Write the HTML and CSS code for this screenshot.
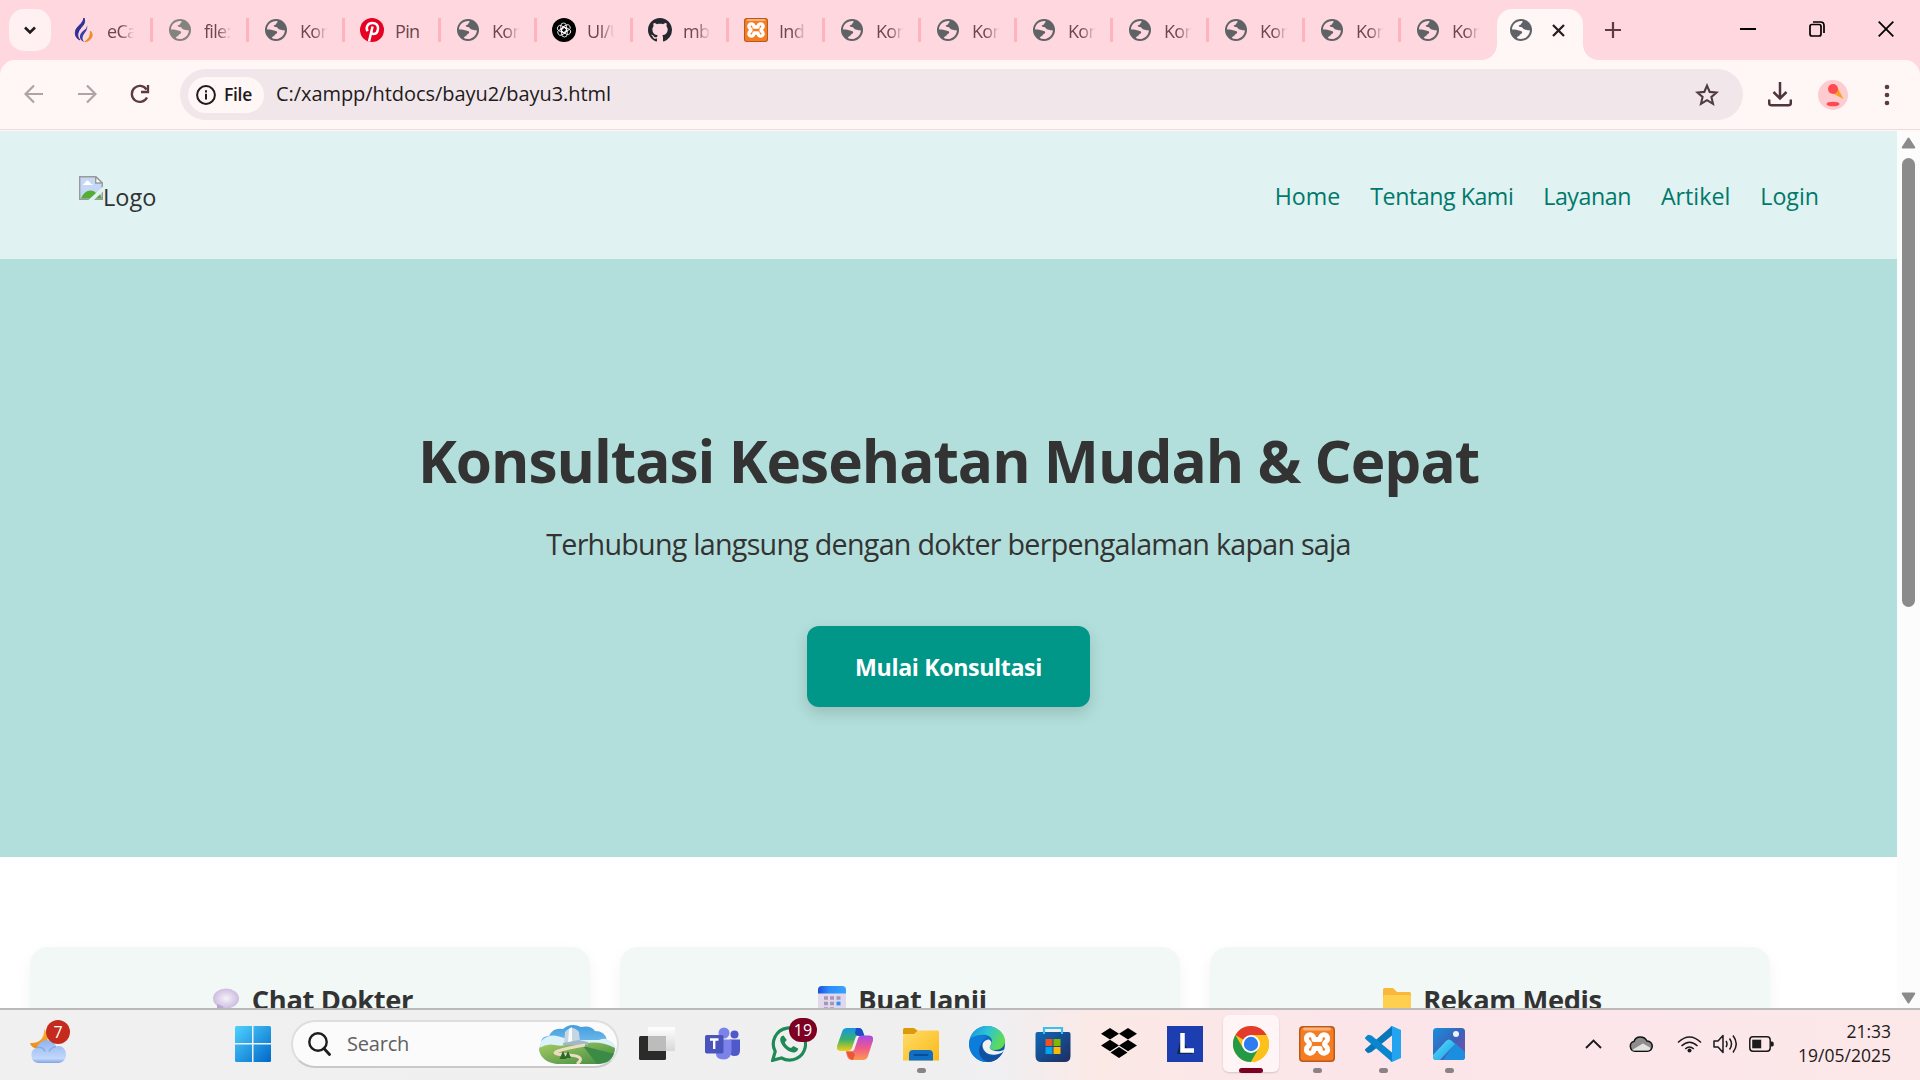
FILE: index.html
```html
<!DOCTYPE html>
<html lang="id">
<head>
<meta charset="utf-8">
<title>Konsultasi Kesehatan</title>
<link rel="stylesheet" href="styles.css">
</head>
<body>
<svg class="defs" aria-hidden="true">
  <defs>
    <symbol id="globe" viewBox="0 0 24 24">
      <circle cx="12" cy="12" r="12" fill="currentColor"/>
      <path class="cut" d="M2.200 11.500C2.300 6.300 6.500 2.200 12.600 2.300c1.700 0 1.400 1.300.3 2-1 .6-.7 1.500-1.500 2.100-.9.600-2 .4-1.900 1.300.1 1 1.700.9 2.800 1.100 1.500.3 1.800 1.900 3 2.500 1.200.6 2 .3 3 .7 1 .5 1.900.5 3.400.2-.3 5.400-4.500 9.600-9.900 9.600-1.700 0-3.200-.4-4.300-1 .2-1.300 1-1.500 2-2.200 1-.6.9-1.600 1.900-2.100 1-.5 1.900-.8 1.900-1.800s-1-1.900-2.400-2c-1.700-.1-2.500-.5-4.200-.9-1.900-.4-2.700-.3-4.500-.3z"/>
    </symbol>
    <symbol id="xampp" viewBox="0 0 36 36">
      <rect width="36" height="36" rx="4" fill="#b85a1c"/>
      <rect x="1.500" y="1.500" width="33" height="33" rx="3" fill="#f57c22"/>
      <rect x="4" y="1.500" width="28" height="3" rx="1.500" fill="#f9b27c"/>
      <path d="M18 13.500h-3C15 6.500 6 8 7.500 13.500c.6 2.500 3 2.500 3 4.500s-2.400 2-3 4.500C6 28 15 29.500 15 22.500h6c0 7 9 5.500 7.500 0-.6-2.500-3-2.500-3-4.500s2.400-2 3-4.500C30 8 21 6.500 21 13.500z" fill="none" stroke="#fff" stroke-width="5" stroke-linejoin="round"/>
    </symbol>
    <linearGradient id="win" x2="1" y2="1"><stop stop-color="#4fd2ff"/><stop offset="1" stop-color="#0067c8"/></linearGradient>
    <linearGradient id="cloud" x2="0" y2="1"><stop stop-color="#8fb4ee"/><stop offset=".8" stop-color="#c3d8fa"/><stop offset="1" stop-color="#7fa2e6"/></linearGradient>
    <linearGradient id="moon" x2="0" y2="1"><stop stop-color="#f7b83a"/><stop offset="1" stop-color="#ee8a15"/></linearGradient>
    <linearGradient id="sky" x2="0" y2="1"><stop stop-color="#3f9be0"/><stop offset="1" stop-color="#a8dcf4"/></linearGradient>
    <linearGradient id="hill" x2="1" y2="1"><stop stop-color="#a9cc62"/><stop offset="1" stop-color="#3d8a42"/></linearGradient>
    <linearGradient id="copA" x2="0" y2="1"><stop stop-color="#1596e8"/><stop offset=".5" stop-color="#3bb06a"/><stop offset="1" stop-color="#f2cf14"/></linearGradient>
    <linearGradient id="copB" x2="0" y2="1"><stop stop-color="#a64be8"/><stop offset=".5" stop-color="#f0588a"/><stop offset="1" stop-color="#fb9a4e"/></linearGradient>
    <linearGradient id="edgeA" x2="1" y2=".4"><stop stop-color="#1590dc"/><stop offset=".5" stop-color="#2cc3d8"/><stop offset="1" stop-color="#5fdc54"/></linearGradient>
    <linearGradient id="edgeB" x2="1" y2="1"><stop stop-color="#0c7fdc"/><stop offset="1" stop-color="#0f4f9e"/></linearGradient>
    <linearGradient id="fold" x2="1" y2="1"><stop stop-color="#ffdc6b"/><stop offset="1" stop-color="#fbb915"/></linearGradient>
    <linearGradient id="store" x2="1" y2="1"><stop stop-color="#0e69b8"/><stop offset="1" stop-color="#1f2c60"/></linearGradient>
    <linearGradient id="photo" x2="1" y2="1"><stop stop-color="#1690e0"/><stop offset=".5" stop-color="#3b62b8"/><stop offset="1" stop-color="#8a45a8"/></linearGradient>
    <linearGradient id="peak" x2="1" y2="1"><stop stop-color="#5fe4fc"/><stop offset="1" stop-color="#149ae4"/></linearGradient>
    <linearGradient id="glass" x2="0" y2="1"><stop stop-color="#fff"/><stop offset="1" stop-color="#d8d8d8"/></linearGradient>
    <radialGradient id="balloon"><stop stop-color="#f6f1fa"/><stop offset="1" stop-color="#cdbde0"/></radialGradient>
    <linearGradient id="calTop" x2="1"><stop stop-color="#1a4fd8"/><stop offset=".4" stop-color="#2d8cff"/><stop offset="1" stop-color="#36a4ff"/></linearGradient>
  </defs>
</svg>

<div class="screen">
  <div class="tabstrip">
    <button class="tab-search"><svg viewBox="0 0 16 16" width="16" height="16"><path d="M3 5.500l5 5 5-5" fill="none" stroke="#1f1a1c" stroke-width="2.600"/></svg></button>
    <div class="tabs">
      <div class="tab"><svg class="fav" viewBox="0 0 24 24"><path d="M12 0c2 5-1 7-4 11s-3 8 0 11C3 20 2 14 5 10s6-5 7-10z" fill="#2b2f96" stroke="#2b2f96"/><path d="M15 7c1 4-1 6-3 9s-2 5 0 8c-5-2-5-7-2-10s5-3 5-7z" fill="#3a3fa8"/><path d="M18.500 13c4 5 0 10-6 11 4-3 6-5 6-11z" fill="#f08a24" stroke="#f08a24"/></svg><span>eCa</span></div>
      <div class="tab"><svg class="fav globe pale"><use href="#globe"/></svg><span>file:</span></div>
      <div class="tab"><svg class="fav globe"><use href="#globe"/></svg><span>Kon</span></div>
      <div class="tab"><svg class="fav" viewBox="0 0 24 24"><circle cx="12" cy="12" r="12" fill="#e60023"/><path d="M7.500 13.300C5.300 9 8 5 12.300 5c4 0 6 2.700 5.700 5.600-.3 3.300-2.200 5.400-4.500 5.300-1.200 0-1.800-.7-2-1.200M12.600 8.500L9 23.500" fill="none" stroke="#fff" stroke-width="2.500"/></svg><span class="short">Pin</span></div>
      <div class="tab"><svg class="fav globe"><use href="#globe"/></svg><span>Kon</span></div>
      <div class="tab"><svg class="fav" viewBox="0 0 24 24"><circle cx="12" cy="12" r="12" fill="#000"/><g fill="none" stroke="#fff" stroke-width=".85"><rect id="petal" x="8.800" y="5" width="5.600" height="9.500" rx="2.800"/><use href="#petal" transform="rotate(60 12 12)"/><use href="#petal" transform="rotate(120 12 12)"/><use href="#petal" transform="rotate(180 12 12)"/><use href="#petal" transform="rotate(240 12 12)"/><use href="#petal" transform="rotate(300 12 12)"/></g></svg><span>UI/U</span></div>
      <div class="tab"><svg class="fav" viewBox="0 0 16 16"><path fill="#24292f" d="M8 0C3.580 0 0 3.580 0 8c0 3.540 2.290 6.530 5.470 7.590.4.070.55-.17.55-.38 0-.19-.01-.82-.01-1.490-2.010.37-2.530-.49-2.690-.94-.09-.23-.48-.94-.82-1.130-.28-.15-.68-.52-.01-.53.63-.01 1.080.58 1.230.82.72 1.210 1.870.87 2.330.66.070-.52.28-.87.51-1.070-1.780-.2-3.640-.89-3.640-3.950 0-.87.31-1.590.82-2.150-.08-.2-.36-1.020.08-2.120 0 0 .67-.21 2.200.82.64-.18 1.320-.27 2-.27s1.360.09 2 .27c1.530-1.040 2.200-.82 2.200-.82.44 1.100.16 1.920.08 2.120.51.56.82 1.270.82 2.150 0 3.070-1.870 3.750-3.650 3.950.29.25.54.73.54 1.480 0 1.070-.01 1.930-.01 2.200 0 .21.15.46.55.38A8.010 8.010 0 0 0 16 8c0-4.420-3.580-8-8-8z"/></svg><span>mb</span></div>
      <div class="tab"><svg class="fav"><use href="#xampp"/></svg><span>Ind</span></div>
      <div class="tab"><svg class="fav globe"><use href="#globe"/></svg><span>Kon</span></div>
      <div class="tab"><svg class="fav globe"><use href="#globe"/></svg><span>Kon</span></div>
      <div class="tab"><svg class="fav globe"><use href="#globe"/></svg><span>Kon</span></div>
      <div class="tab"><svg class="fav globe"><use href="#globe"/></svg><span>Kon</span></div>
      <div class="tab"><svg class="fav globe"><use href="#globe"/></svg><span>Kon</span></div>
      <div class="tab"><svg class="fav globe"><use href="#globe"/></svg><span>Kon</span></div>
      <div class="tab last"><svg class="fav globe"><use href="#globe"/></svg><span>Kon</span></div>
      <div class="tab active"><svg class="fav globe"><use href="#globe"/></svg><svg width="13" height="13" viewBox="0 0 13 13"><path d="M1 1l11 11M12 1L1 12" stroke="#2a1d20" stroke-width="2.300"/></svg></div>
    </div>
    <svg class="new-tab" width="16" height="16" viewBox="0 0 16 16"><path d="M8 0v16M0 8h16" stroke="#5b3a40" stroke-width="2.200"/></svg>
    <div class="window-buttons">
      <svg width="16" height="16" viewBox="0 0 16 16"><path d="M0 8h16" stroke="#000" stroke-width="2"/></svg>
      <svg width="16" height="16" viewBox="0 0 16 16" fill="none" stroke="#000" stroke-width="1.700"><rect x="1" y="3.500" width="11" height="11.500" rx="2"/><path d="M4 1h7.500Q15 1 15 4.500V12"/></svg>
      <svg width="16" height="16" viewBox="0 0 16 16"><path d="M.7 .7l14.600 14.600M15.300 .7L.7 15.300" stroke="#000" stroke-width="1.800"/></svg>
    </div>
  </div>

  <div class="toolbar">
    <svg class="nav-icon" width="20" height="20" viewBox="0 0 20 20"><path d="M19 10H2M10 1.500L1.500 10l8.500 8.500" fill="none" stroke="#b0a3a5" stroke-width="2.200"/></svg>
    <svg class="nav-icon" width="20" height="20" viewBox="0 0 20 20"><path d="M1 10h17M10 1.500l8.500 8.500-8.500 8.500" fill="none" stroke="#b0a3a5" stroke-width="2.200"/></svg>
    <svg class="nav-icon" width="20" height="20" viewBox="0 0 20 20"><path d="M17 13.500A8 8 0 1 1 16.500 5.500M18 1v7h-7" fill="none" stroke="#5b3a40" stroke-width="2.300"/></svg>
    <div class="omnibox">
      <div class="chip"><svg width="20" height="20" viewBox="0 0 20 20"><circle cx="10" cy="10" r="8.900" fill="none" stroke="#221a1c" stroke-width="2"/><path d="M10 8.800v5.700M10 5.300v2.100" stroke="#221a1c" stroke-width="2"/></svg><span>File</span></div>
      <span class="url">C:/xampp/htdocs/bayu2/bayu3.html</span>
      <svg class="star" width="24" height="23" viewBox="0 0 24 23"><path d="M12 2.600l2.700 6.300 6.900.6-5.200 4.500 1.600 6.800-6-3.600-6 3.600L7.600 14 2.400 9.500l6.900-.6z" fill="none" stroke="#4f3b42" stroke-width="2.100"/></svg>
    </div>
    <svg class="download" width="24" height="25" viewBox="0 0 24 25"><path d="M12 0v16M5.500 10l6.500 6.500 6.500-6.500M1.200 17.500V21q0 2.300 2.300 2.300h17q2.300 0 2.300-2.300v-3.500" fill="none" stroke="#4f353c" stroke-width="2.500"/></svg>
    <svg class="avatar" width="30" height="30" viewBox="0 0 30 30"><circle cx="15" cy="15" r="15" fill="#fecbd0"/><path d="M15 13.500l5-5L25.500 19z" fill="#fba024"/><circle cx="15" cy="9" r="5" fill="#ff4a50"/><ellipse cx="15" cy="24" rx="6.500" ry="2.300" fill="#ff4a50"/></svg>
    <svg class="menu" width="6" height="22" viewBox="0 0 6 22" fill="#5b3a40"><circle cx="3" cy="3" r="2.300"/><circle cx="3" cy="11" r="2.300"/><circle cx="3" cy="19" r="2.300"/></svg>
  </div>

  <div class="viewport">
    <div class="page">
      <header class="site-header">
        <div class="logo"><svg width="24" height="24" viewBox="0 0 24 24"><path d="M.7.700h16L23.300 7v16.300H.7z" fill="#c5d9f7" stroke="#9a9a9a" stroke-width="1.400"/><path d="M16.700.700V7h6.600z" fill="#fff" stroke="#9a9a9a" stroke-width="1.400"/><path d="M3.500 9q2-1 3-3 2-3 4 0 1 2 4 3z" fill="#fff"/><path d="M2 22.500C5 15 12 12 17 17l4 1 2 4.500z" fill="#55ad35"/><path d="M24 10.500L9.500 24H15l9-8.500z" fill="#e0f2f1"/></svg><span>Logo</span></div>
        <nav class="site-nav"><a>Home</a><a class="tight">Tentang Kami</a><a class="tight">Layanan</a><a>Artikel</a><a>Login</a></nav>
      </header>
      <section class="hero">
        <h1>Konsultasi Kesehatan Mudah &amp; Cepat</h1>
        <p>Terhubung langsung dengan dokter berpengalaman kapan saja</p>
        <a class="cta">Mulai Konsultasi</a>
      </section>
      <section class="services">
        <article class="card"><h3><svg width="28" height="28" viewBox="0 0 28 28"><ellipse cx="14" cy="12.500" rx="13" ry="10" fill="url(#balloon)"/><path d="M5 18l0 7 7-4z" fill="#b9a6d4"/></svg><span>Chat Dokter</span></h3></article>
        <article class="card"><h3><svg width="28" height="28" viewBox="0 0 28 28"><rect width="28" height="28" rx="4" fill="#e2d8ee"/><path d="M0 7.500V4q0-4 4-4h20q4 0 4 4v3.500z" fill="url(#calTop)"/><path d="M6 12h4M12 12h4M18.500 12h4M6 17.500h4M12 17.500h4M6 23h4M12 23h4" stroke="#a598b4" stroke-width="3.600"/><path d="M18.500 17.500h4" stroke="#2d96f5" stroke-width="3.800"/></svg><span>Buat Janji</span></h3></article>
        <article class="card"><h3><svg width="28" height="28" viewBox="0 0 28 28"><path d="M0 3.500Q0 2 1.500 2H10l4 4h12.500Q28 6 28 7.500V16H0z" fill="#f9b83c"/><path d="M0 11q0-2 2-2h24q2 0 2 2v15H0z" fill="#ffcf50"/></svg><span>Rekam Medis</span></h3></article>
      </section>
    </div>
    <div class="scrollbar">
      <svg width="15" height="12" viewBox="0 0 15 12"><path d="M7.500 1.500l5.800 9H1.700z" fill="#8b8b8b" stroke="#8b8b8b" stroke-width="2" stroke-linejoin="round"/></svg>
      <div class="thumb"></div>
      <svg class="down" width="15" height="12" viewBox="0 0 15 12"><path d="M7.500 10.500l5.800-9H1.700z" fill="#8b8b8b" stroke="#8b8b8b" stroke-width="2" stroke-linejoin="round"/></svg>
    </div>
  </div>

  <div class="taskbar">
    <div class="weather"><svg width="36" height="43" viewBox="0 0 36 43"><path d="M14 8c1 9-5 15-14 14 1 4 6 7 12 5s8-12 2-19z" fill="url(#moon)"/><path d="M8 42a8 8 0 0 1-1-15.500C9 18 23 16 26 25.500c6-2 10 3 10 8 0 6-4 8.500-9 8.500z" fill="url(#cloud)"/><path d="M7 26.500c4-1 7 1 8 4M26 25.500q-5 1-7 5" fill="none" stroke="#86a9e8" stroke-width="1.500"/></svg><b>7</b></div>
    <svg class="start" width="36" height="36" viewBox="0 0 36 36" fill="url(#win)"><path d="M1.500 0H17v17H0V1.500Q0 0 1.500 0zM18.500 0h16Q36 0 36 1.500V17H18.500zM0 18.500h17V36H1.500Q0 36 0 34.500zM18.500 18.500H36v16q0 1.500-1.500 1.500h-16z"/></svg>
    <div class="search">
      <svg width="23" height="24" viewBox="0 0 23 24"><circle cx="10" cy="10" r="8.700" fill="none" stroke="#1d1d1d" stroke-width="2.400"/><path d="M16 16.500l5.500 6" stroke="#1d1d1d" stroke-width="2.800" stroke-linecap="round"/></svg>
      <span>Search</span>
      <svg class="scene" width="76" height="40" viewBox="0 0 76 40"><clipPath id="sc"><path d="M2 19Q2 12 10 12 14 3 24 5 32-2 42 3q10-2 14 4 10 0 12 9 8 3 8 9-2 14-16 15H18Q2 38 0 25z"/></clipPath><g clip-path="url(#sc)"><rect width="76" height="40" fill="url(#sky)"/><path d="M2 17q8-7 16-5t14 4h28q8-4 16 4v6H0z" fill="#dcf1f8"/><path d="M0 24q8-5 16-3t12-1 20-1q14-2 28 5v16H0z" fill="url(#hill)"/><path d="M44 22l32 8v6L58 40z" fill="#3b8a46"/><path d="M26 8q7-8 14 0l1 11H25z" fill="#c5d6e2"/><path d="M30 5l3-2v16h-4z" fill="#f8fbfd"/><path d="M40 16l9 2v3H24v-2z" fill="#9fb8ca"/><path d="M46 21q-18 3-27 6t10 4 9 9" fill="none" stroke="#ecdcc2" stroke-width="3"/><path d="M24 27l3.500 8h-7zM29 27l3 7h-6z" fill="#2c6b2a"/></g></svg>
    </div>
    <div class="apps">
      <div class="app"><svg viewBox="0 0 36 36"><rect x="0" y="10" width="27" height="24" rx="1.500" fill="#2b2b2a"/><rect x="9" y="1" width="27" height="24" rx="1" fill="url(#glass)"/><rect x="9" y="10" width="18" height="15" fill="#bcbcbc"/></svg></div>
      <div class="app"><svg viewBox="0 0 36 36"><circle cx="19" cy="7" r="5.500" fill="#7b83eb"/><circle cx="29.500" cy="8.500" r="4" fill="#5059c9"/><path d="M25 13.500h10v11q0 5.500-5.500 5.500T25 25z" fill="#5059c9"/><path d="M11 13.500h15.500v11q0 9-8 9t-7.500-7z" fill="#7b83eb"/><rect y="9" width="18.500" height="18.500" rx="1.800" fill="#4b53bc"/><path d="M5 13.500h8.500M9.200 13.500v9.500" stroke="#fff" stroke-width="2.400"/></svg></div>
      <div class="app"><svg viewBox="0 0 36 36"><path d="M1.700 34.300l2.500-8.800A16.100 16.100 0 1 1 10.500 32z" fill="none" stroke="#1f8a55" stroke-width="3.200"/><path d="M12.500 9.500c-2.200 0-3.300 2.200-3.300 4.300 0 5 7.500 12.700 13.200 12.700 2.600 0 4.800-1.700 4.700-4l-4.700-2.600-2.400 2.200c-3-.9-5.200-3.200-6.200-5.900l2-2.200z" fill="#1f8a55"/></svg><b class="count">19</b></div>
      <div class="app"><svg viewBox="0 0 36 36"><path d="M10 2h11q4 0 5 4l1 3h-5q-3 0-4 4l-3 9q-1 3-4 3H4q-5 0-4-5L5 6q1-4 5-4z" fill="url(#copA)"/><path d="M19 2h3q3 0 4 4l1.500 4H22q-3 0-4-3z" fill="#1d4cc4"/><path d="M26 34H15q-4 0-5-4l-1-4.500h5q3 0 4-4l3-9q1-3 4-3h7q5 0 4 5l-5 15.500q-1 4-5 4z" fill="url(#copB)"/><path d="M9 25.500h5q2.500 0 4 3l-2 5.500q-4-.5-5-4z" fill="#ee5535"/></svg></div>
      <div class="app"><svg viewBox="0 0 36 36"><path d="M0 3.500Q0 2 1.500 2H11l4 3-4 4H0z" fill="#dc9a0a"/><path d="M0 8h11l4-3.500h19.500Q36 4.500 36 6v28.500H0z" fill="url(#fold)"/><path d="M6 34.500V28q0-4 4-4h16q4 0 4 4v6.500z" fill="#0f6fc4"/><path d="M11.500 29h13" stroke="#0a4d92" stroke-width="2" stroke-linecap="round"/></svg><i></i></div>
      <div class="app"><svg viewBox="0 0 36 36"><circle cx="18" cy="18" r="18" fill="url(#edgeB)"/><path d="M1 13C3 5 10 0 18 0c10 0 18 7 18 15 0 6-5 9-10 9-4 0-6-2-5-4 1-1 2-2 2-5 0-4-5-7-11-6-5 .5-9 2-11 4z" fill="url(#edgeA)"/><path d="M0 16c3-6 12-8 18-5-6 2-7 9-4 14 4 6 12 7 17 4-3 5-8 7-13 7C8 36 0 28 0 16z" fill="#0d7ddb"/><path d="M15 15c-4 5-1 13 7 14.500 5 1 9-1 11-3-2 5-7 9.500-14 9.500-10-3-12-15-4-21z" fill="#11519f"/><path d="M20 13.500c-5 .5-7.500 4-6 8.500 1.500 5 7 7.500 13 6.500 5-.7 7.500-2.500 8.500-5-3 2-8 2.500-12 .8-3-1.300-3.500-3-2-5 1.500-2 1.500-4-1.500-5.800z" fill="#f1f1f2"/></svg></div>
      <div class="app"><svg viewBox="0 0 36 36"><path d="M9 8V2h18v6" fill="none" stroke="#35c1f1" stroke-width="2.200"/><path d="M.5 8q0-2 2-2h31q2 0 2 2v22q0 6-6 6h-23q-6 0-6-6z" fill="url(#store)"/><path d="M9 8V2.500M27 8V2.500" stroke="#35c1f1" stroke-width="2"/><path d="M10.500 13h7v7h-7z" fill="#f25022"/><path d="M18.500 13h7v7h-7z" fill="#7fba00"/><path d="M10.500 21h7v7h-7z" fill="#00a4ef"/><path d="M18.500 21h7v7h-7z" fill="#ffb900"/></svg></div>
      <div class="app"><svg viewBox="0 0 36 36"><path d="M9 2l9 5.800-9 5.700-9-5.700zM27 2l9 5.800-9 5.700-9-5.700zM9 13.700l9 5.700-9 5.800-9-5.800zM27 13.700l9 5.700-9 5.800-9-5.800zM18 21l8.500 5.500L18 32l-8.500-5.500z"/></svg></div>
      <div class="app"><svg viewBox="0 0 36 36"><path d="M0 0h36v36H0z" fill="#1d3eb0"/><path d="M14 12L10 28h16l-4-3z" fill="#0b2a4a"/><path d="M15.500 7v17.500H27" fill="none" stroke="#fff" stroke-width="4.500"/></svg></div>
      <div class="app current"><svg viewBox="0 0 36 36"><circle cx="18" cy="18" r="18" fill="#fcc21b"/><path d="M18 18L2.400 9A18 18 0 0 1 33.600 9z" fill="#e33b2e"/><path d="M18 9h15.600L18 12z" fill="#e33b2e"/><path d="M2.400 9A18 18 0 0 0 18 36l7.800-13.500L18 27 10.200 22.500z" fill="#259a46"/><path d="M25.800 22.500L18 36A18 18 0 0 0 33.600 9H18z" fill="#fcc21b"/><circle cx="18" cy="18" r="9" fill="#fff"/><circle cx="18" cy="18" r="7.200" fill="#2f7cf0"/></svg><i></i></div>
      <div class="app"><svg><use href="#xampp"/></svg><i></i></div>
      <div class="app"><svg viewBox="0 0 36 36"><path d="M27 0v9.500L6.500 26 3 27.200.4 24.800q-.8-.9 0-1.800z" fill="#0877b9"/><path d="M27 36v-9.500L6.500 9.500 3 8.700.4 11.200q-.8.900 0 1.800z" fill="#0a86cf"/><path d="M27 0l9 4v28l-9 4q-1.500 0-2-1 2 1 2-1V2q0-2-2-1 .5-1 2-1z" fill="#24a3f0"/></svg><i></i></div>
      <div class="app"><svg viewBox="0 0 36 36"><rect x="2" y="2" width="32" height="32" rx="3.500" fill="url(#photo)"/><circle cx="25" cy="8" r="3" fill="#eef2fb"/><path d="M24 17l10 9v5q0 3-3 3H12z" fill="#1b8ee0"/><path d="M2 29l13-14q3-3 6 0l3 3-15 16H5.500Q2 34 2 30z" fill="url(#peak)"/></svg><i></i></div>
    </div>
    <div class="tray">
      <svg width="17" height="10" viewBox="0 0 17 10"><path d="M1 9l7.500-7.500L16 9" fill="none" stroke="#1a1a1a" stroke-width="1.900"/></svg>
      <svg class="onedrive" width="24" height="16" viewBox="0 0 24 16"><path d="M6 15.200a5 5 0 0 1-1-9.800C7-.5 15-.5 18 5c7 .5 7 10.200 0 10.200z" fill="#8d8d8d" stroke="#111" stroke-width="1.500"/><path d="M3 14l11-6.500 7 4q1 3-3 3H6q-2 0-3-.5z" fill="#e2e2e2"/></svg>
      <svg class="wifi" width="25" height="17" viewBox="0 0 25 17"><path d="M1 6.500q11.500-11 23 0M4.500 10q8-7.500 16 0M8.200 13q4.300-4 8.600 0" fill="none" stroke="#1a1a1a" stroke-width="1.500"/><circle cx="12.500" cy="14.500" r="2" fill="#1a1a1a"/></svg>
      <svg class="speaker" width="25" height="20" viewBox="0 0 25 20"><path d="M1 7h4l5-5.500v17L5 13H1zM13 7q2 3 0 6M16.500 4.500q4 5.500 0 11M20 1.500q6.500 8.500 0 17" fill="none" stroke="#1a1a1a" stroke-width="1.500" stroke-linejoin="round"/></svg>
      <svg class="battery" width="25" height="16" viewBox="0 0 25 16"><rect x=".8" y=".8" width="20.400" height="14.400" rx="3.200" fill="none" stroke="#1a1a1a" stroke-width="1.500"/><rect x="3.200" y="3.700" width="9" height="8.600" fill="#1a1a1a"/><path d="M22 5.500h1.300q1.500 0 1.500 2.500t-1.500 2.500H22z" fill="#1a1a1a"/></svg>
      <div class="clock"><span>21:33</span><span>19/05/2025</span></div>
    </div>
  </div>
</div>
</body>
</html>
```
FILE: styles.css
```css
* { box-sizing: border-box; }
body { margin: 0; font-family: "Open Sans", "Noto Sans", sans-serif; color: #333; }
svg { display: block; flex: none; }
span, a { white-space: nowrap; }
.defs { position: absolute; width: 0; height: 0; }
.screen { width: 1920px; height: 1080px; display: flex; flex-direction: column; overflow: hidden; background: #ffd7de; }

/* Tab strip */
.tabstrip { height: 60px; flex: none; display: flex; padding-left: 9px; }
.tab-search { width: 42px; height: 42px; margin: 9px 6px 0 0; border: 0; padding: 0; border-radius: 15px; background: #fff0f2; display: grid; place-items: center; }
.tabs { display: flex; height: 60px; --cut: #ffd7de; }
.tab { width: 96px; display: flex; align-items: center; padding-left: 15px; border-right: 3px solid #ffb3c0; height: 24px; margin-top: 18px; font-size: 18px; color: #6b474e; }
.tab .fav { width: 24px; height: 24px; margin-right: 11px; }
.tab .fav.globe { width: 22px; height: 22px; margin: 0 13px 0 1px; color: #5f6368; }
.tab .fav.pale { color: #85837f; }
.tab span { width: 29px; overflow: hidden; letter-spacing: -.7px; line-height: 24px; padding-top: 1px; mask-image: linear-gradient(90deg, #000 45%, transparent 95%); }
.tab .short { mask-image: none; }
.cut { fill: var(--cut); }
.tab.last { border-right: 0; width: 95px; margin-right: 1px; }
.tab.active { --cut: #fff7f5; height: 51px; width: 86px; margin-top: 9px; padding: 0 0 9px 12px; border: 0; border-radius: 15px 15px 0 0; background: #fff7f5; position: relative; }
.tab.active .fav.globe { margin-right: 20px; }
.tab.active::before, .tab.active::after { content: ""; position: absolute; bottom: 0; width: 15px; height: 15px; }
.tab.active::before { left: -15px; background: radial-gradient(circle at 0 0, transparent 14.5px, #fff7f5 15px); }
.tab.active::after { right: -15px; background: radial-gradient(circle at 100% 0, transparent 14.5px, #fff7f5 15px); }
.new-tab { margin: 22px 0 0 22px; }
.window-buttons { display: flex; gap: 53px; margin: 21px 26px 0 auto; }

/* Toolbar */
.toolbar { height: 71px; flex: none; display: flex; align-items: center; padding: 0 30px 2px 24px; background: linear-gradient(#f0dcdd, #f0dcdd) 0 69px / 100% 1px no-repeat #fff7f5; border-radius: 15px 15px 0 0; }
.nav-icon { margin: -1px 33px 0 0; }
.omnibox { width: 1563px; height: 51px; border-radius: 26px; background: #f1e6ea; display: flex; align-items: center; padding: 0 24px 0 8px; margin-left: -3px; }
.chip { width: 76px; height: 36px; border-radius: 18px; background: #fff7f5; display: flex; align-items: center; gap: 8px; padding-left: 8px; font-size: 17.500px; font-weight: 600; letter-spacing: -.3px; color: #221a1c; }
.chip span, .url { margin-top: -2px; }
.url { font-size: 20px; letter-spacing: -.06px; color: #221a1c; margin-left: 12px; }
.star { margin-left: auto; }
.download { margin-left: 25px; }
.avatar { margin-left: 26px; }
.menu { margin-left: 36px; }

/* Page */
.viewport { height: 877px; flex: none; display: flex; background: #fff; overflow: hidden; }
.page { width: 1897px; }
.site-header { height: 128px; background: #e0f2f1; padding: 0 78px 0 79px; display: flex; justify-content: space-between; align-items: center; font-size: 23.500px; }
.logo { display: flex; align-items: flex-start; }
.logo svg { margin-top: -1px; }
.logo span { line-height: 32px; padding-top: 4px; }
.site-nav { display: flex; gap: 30px; font-size: 23.200px; color: #00796b; line-height: 32px; padding-top: 2px; }
.site-nav .tight { letter-spacing: -.45px; }
.hero { height: 598px; background: #b2dfdb; padding-top: 161px; display: flex; flex-direction: column; align-items: center; }
.hero h1 { margin: 0; font-size: 58.500px; letter-spacing: -1px; line-height: 80px; }
.hero p { margin: 24px 0 62px; font-size: 28.700px; letter-spacing: -.75px; line-height: 40px; }
.cta { width: 283px; height: 81px; border-radius: 12px; background: #009688; color: #fff; font-size: 23.200px; letter-spacing: -.37px; font-weight: 700; display: grid; place-items: center; box-shadow: 0 6px 15px rgba(0, 0, 0, .15); }
.services { display: flex; gap: 30px; padding: 90px 30px; }
.card { width: 560px; height: 300px; border-radius: 18px; background: #f1f8f6; box-shadow: 0 6px 15px rgba(0, 0, 0, .05); }
.card h3 { margin: 0; padding: 34px 0 0 5px; display: flex; justify-content: center; gap: 12px; font-size: 27.300px; letter-spacing: -.35px; line-height: 38px; }
.card h3 svg { margin-top: 5px; }
.scrollbar { width: 23px; background: #fcfcfc; display: flex; flex-direction: column; align-items: center; padding: 6px 0 4px; }
.thumb { width: 13px; height: 449px; margin-top: 9px; border-radius: 7px; background: #8b8b8b; }
.down { margin-top: auto; }

/* Taskbar */
.taskbar { height: 72px; flex: none; border-top: 2px solid #bdb9ba; display: flex; align-items: center; padding: 0 29px 2px 30px; background: linear-gradient(90deg, #f0f0f0 0, #efeff0 940px, #f0eff1 1000px, #fbe9e6 1100px, #fbe5e9 1350px, #fce7e9 1900px); }
.weather { width: 206px; margin-top: -3px; position: relative; }
.weather b { position: absolute; left: 16px; top: -1px; width: 24px; height: 24px; border-radius: 50%; background: #c42b1c; color: #fff; font-size: 16px; font-weight: 400; line-height: 24px; text-align: center; }
.start { margin: 0 0 0 -1px; }
.search { width: 328px; height: 48px; margin: -1px 5px 0 20px; border: 2px solid #dedede; border-bottom-color: #c9c9c9; border-radius: 24px; background: #fbfbfb; display: flex; align-items: center; padding: 0 2px 0 15px; font-size: 20px; letter-spacing: -.2px; color: #606060; }
.search span { margin-left: 16px; }
.scene { margin-left: auto; }
.apps { display: flex; }
.app { width: 66px; height: 70px; display: grid; place-items: center; position: relative; }
.app svg { width: 36px; height: 36px; position: relative; }
.app i { position: absolute; left: 29px; bottom: 6px; width: 9px; height: 5px; border-radius: 3px; background: #8a8286; }
.current::before { content: ""; position: absolute; left: 5px; top: 6px; width: 56px; height: 57px; border-radius: 6px; background: #fff4f6; box-shadow: 0 1px 2px rgba(0, 0, 0, .15); }
.current i { left: 21px; width: 24px; background: #7d0022; }
.count { position: absolute; left: 33px; top: 9px; width: 28px; height: 24px; border-radius: 12px; background: #7d0022; color: #fff; font-size: 16px; font-weight: 400; line-height: 24px; text-align: center; }
.tray { display: flex; align-items: center; margin-left: auto; }
.onedrive { margin-left: 27px; }
.wifi { margin-left: 24px; }
.speaker { margin-left: 11px; }
.battery { margin-left: 11px; }
.clock { width: 117px; margin-top: -2px; display: flex; flex-direction: column; align-items: flex-end; font-size: 17.500px; line-height: 24px; color: #1f1a1b; }
```
